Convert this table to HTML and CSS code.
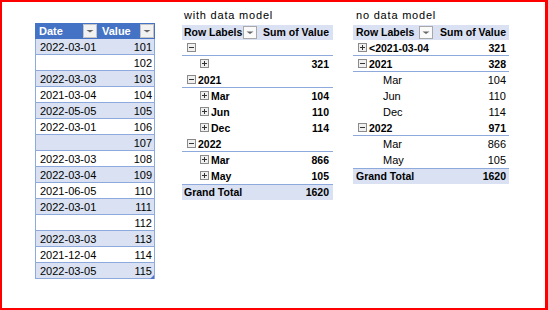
FILE: index.html
```html
<!DOCTYPE html>
<html>
<head>
<meta charset="utf-8">
<link rel="stylesheet" href="styles.css">
</head>
<body>
<div class="frame">
  <div class="xtable">
    <div class="xhead">
      <div class="hcell c-date"><span>Date</span><svg class="fbtn" width="14" height="14" viewBox="0 0 14 14"><rect x="0.5" y="0.5" width="13" height="13" fill="#f2f2f2" stroke="#c4c4c4"/><path d="M3.5 6h7l-3.5 2.5z" fill="#666"/></svg></div>
      <div class="hcell c-val"><span>Value</span><svg class="fbtn" width="14" height="14" viewBox="0 0 14 14"><rect x="0.5" y="0.5" width="13" height="13" fill="#f2f2f2" stroke="#c4c4c4"/><path d="M3.5 6h7l-3.5 2.5z" fill="#666"/></svg></div>
    </div>
    <div class="xrow band"><div class="c-date">2022-03-01</div><div class="c-val">101</div></div>
    <div class="xrow"><div class="c-date"></div><div class="c-val">102</div></div>
    <div class="xrow band"><div class="c-date">2022-03-03</div><div class="c-val">103</div></div>
    <div class="xrow"><div class="c-date">2021-03-04</div><div class="c-val">104</div></div>
    <div class="xrow band"><div class="c-date">2022-05-05</div><div class="c-val">105</div></div>
    <div class="xrow"><div class="c-date">2022-03-01</div><div class="c-val">106</div></div>
    <div class="xrow band"><div class="c-date"></div><div class="c-val">107</div></div>
    <div class="xrow"><div class="c-date">2022-03-03</div><div class="c-val">108</div></div>
    <div class="xrow band"><div class="c-date">2022-03-04</div><div class="c-val">109</div></div>
    <div class="xrow"><div class="c-date">2021-06-05</div><div class="c-val">110</div></div>
    <div class="xrow band"><div class="c-date">2022-03-01</div><div class="c-val">111</div></div>
    <div class="xrow"><div class="c-date"></div><div class="c-val">112</div></div>
    <div class="xrow band"><div class="c-date">2022-03-03</div><div class="c-val">113</div></div>
    <div class="xrow"><div class="c-date">2021-12-04</div><div class="c-val">114</div></div>
    <div class="xrow band"><div class="c-date">2022-03-05</div><div class="c-val">115</div></div>
    <span class="handle"></span>
  </div>

  <div class="pivot p1">
    <div class="plabel">with data model</div>
    <div class="ptable">
      <div class="prow phead"><div class="plab">Row Labels<svg class="pbtn" width="14" height="13" viewBox="0 0 14 13"><rect x="0.5" y="0.5" width="13" height="12" fill="#fafafa" stroke="#a8a8a8"/><path d="M3.5 5.5h7l-3.5 2.5z" fill="#666"/></svg></div><div class="pval">Sum of Value</div></div>
      <div class="prow b line"><div class="plab l0"><svg class="ex" width="9" height="9" viewBox="0 0 9 9"><rect x="0.5" y="0.5" width="8" height="8" fill="#f0f0f0" stroke="#8a8a8a"/><path d="M2 4.5h5" stroke="#333"/></svg></div><div class="pval"></div></div>
      <div class="prow b"><div class="plab l1"><svg class="ex" width="9" height="9" viewBox="0 0 9 9"><rect x="0.5" y="0.5" width="8" height="8" fill="#f0f0f0" stroke="#8a8a8a"/><path d="M2 4.5h5M4.5 2v5" stroke="#333"/></svg></div><div class="pval">321</div></div>
      <div class="prow b line"><div class="plab l0"><svg class="ex" width="9" height="9" viewBox="0 0 9 9"><rect x="0.5" y="0.5" width="8" height="8" fill="#f0f0f0" stroke="#8a8a8a"/><path d="M2 4.5h5" stroke="#333"/></svg>2021</div><div class="pval"></div></div>
      <div class="prow b"><div class="plab l1"><svg class="ex" width="9" height="9" viewBox="0 0 9 9"><rect x="0.5" y="0.5" width="8" height="8" fill="#f0f0f0" stroke="#8a8a8a"/><path d="M2 4.5h5M4.5 2v5" stroke="#333"/></svg>Mar</div><div class="pval">104</div></div>
      <div class="prow b"><div class="plab l1"><svg class="ex" width="9" height="9" viewBox="0 0 9 9"><rect x="0.5" y="0.5" width="8" height="8" fill="#f0f0f0" stroke="#8a8a8a"/><path d="M2 4.5h5M4.5 2v5" stroke="#333"/></svg>Jun</div><div class="pval">110</div></div>
      <div class="prow b"><div class="plab l1"><svg class="ex" width="9" height="9" viewBox="0 0 9 9"><rect x="0.5" y="0.5" width="8" height="8" fill="#f0f0f0" stroke="#8a8a8a"/><path d="M2 4.5h5M4.5 2v5" stroke="#333"/></svg>Dec</div><div class="pval">114</div></div>
      <div class="prow b line"><div class="plab l0"><svg class="ex" width="9" height="9" viewBox="0 0 9 9"><rect x="0.5" y="0.5" width="8" height="8" fill="#f0f0f0" stroke="#8a8a8a"/><path d="M2 4.5h5" stroke="#333"/></svg>2022</div><div class="pval"></div></div>
      <div class="prow b"><div class="plab l1"><svg class="ex" width="9" height="9" viewBox="0 0 9 9"><rect x="0.5" y="0.5" width="8" height="8" fill="#f0f0f0" stroke="#8a8a8a"/><path d="M2 4.5h5M4.5 2v5" stroke="#333"/></svg>Mar</div><div class="pval">866</div></div>
      <div class="prow b"><div class="plab l1"><svg class="ex" width="9" height="9" viewBox="0 0 9 9"><rect x="0.5" y="0.5" width="8" height="8" fill="#f0f0f0" stroke="#8a8a8a"/><path d="M2 4.5h5M4.5 2v5" stroke="#333"/></svg>May</div><div class="pval">105</div></div>
      <div class="prow b total"><div class="plab">Grand Total</div><div class="pval">1620</div></div>
    </div>
  </div>

  <div class="pivot p2">
    <div class="plabel">no data model</div>
    <div class="ptable">
      <div class="prow phead"><div class="plab">Row Labels<svg class="pbtn" width="14" height="13" viewBox="0 0 14 13"><rect x="0.5" y="0.5" width="13" height="12" fill="#fafafa" stroke="#a8a8a8"/><path d="M3.5 5.5h7l-3.5 2.5z" fill="#666"/></svg></div><div class="pval">Sum of Value</div></div>
      <div class="prow b line"><div class="plab l0"><svg class="ex" width="9" height="9" viewBox="0 0 9 9"><rect x="0.5" y="0.5" width="8" height="8" fill="#f0f0f0" stroke="#8a8a8a"/><path d="M2 4.5h5M4.5 2v5" stroke="#333"/></svg>&lt;2021-03-04</div><div class="pval">321</div></div>
      <div class="prow b line"><div class="plab l0"><svg class="ex" width="9" height="9" viewBox="0 0 9 9"><rect x="0.5" y="0.5" width="8" height="8" fill="#f0f0f0" stroke="#8a8a8a"/><path d="M2 4.5h5" stroke="#333"/></svg>2021</div><div class="pval">328</div></div>
      <div class="prow"><div class="plab l2">Mar</div><div class="pval">104</div></div>
      <div class="prow"><div class="plab l2">Jun</div><div class="pval">110</div></div>
      <div class="prow"><div class="plab l2">Dec</div><div class="pval">114</div></div>
      <div class="prow b line"><div class="plab l0"><svg class="ex" width="9" height="9" viewBox="0 0 9 9"><rect x="0.5" y="0.5" width="8" height="8" fill="#f0f0f0" stroke="#8a8a8a"/><path d="M2 4.5h5" stroke="#333"/></svg>2022</div><div class="pval">971</div></div>
      <div class="prow"><div class="plab l2">Mar</div><div class="pval">866</div></div>
      <div class="prow"><div class="plab l2">May</div><div class="pval">105</div></div>
      <div class="prow b total"><div class="plab">Grand Total</div><div class="pval">1620</div></div>
    </div>
  </div>
</div>
</body>
</html>
```

FILE: styles.css
```css
* { box-sizing: border-box; }
html, body { margin: 0; padding: 0; background: #fff; }
body {
  font-family: "Liberation Sans", Arial, sans-serif;
  font-size: 11px;
  color: #000;
}
.frame {
  width: 548px;
  height: 310px;
  border: 2px solid #ff0000;
  border-right-width: 3px;
  display: flex;
  align-items: flex-start;
  padding-left: 33px;
}

/* Excel table */
.xtable {
  position: relative;
  width: 120px;
  margin-top: 21px;
  border-left: 1px solid #8ea9db;
  border-right: 1px solid #8ea9db;
}
.xhead {
  display: flex;
  height: 16px;
  margin: 0 -1px;
  background: #4472c4;
  color: #fff;
  font-weight: bold;
}
.hcell {
  display: flex;
  justify-content: space-between;
  align-items: flex-start;
  padding-top: 2px;
  line-height: 13px;
}
.hcell .fbtn { display: block; margin-top: -1px; margin-right: 1px; }
.xhead .c-date { width: 63px; padding-left: 4px; }
.xhead .c-val { flex: 1; padding-left: 4px; }
.xrow {
  display: flex;
  height: 16px;
  border-bottom: 1px solid #8ea9db;
  padding-top: 2px;
  line-height: 13px;
}
.xrow.band { background: #d9e1f2; }
.xrow .c-date { width: 62px; padding-left: 4px; }
.xrow .c-val { flex: 1; text-align: right; padding-right: 2px; }
.handle {
  position: absolute;
  right: 0;
  bottom: 0;
  width: 0;
  height: 0;
  border-left: 4px solid transparent;
  border-bottom: 4px solid #4f73c9;
}

/* Pivot tables */
.pivot {
  display: flex;
  flex-direction: column;
  margin-top: 6px;
}
.p1 { margin-left: 27px; width: 151px; }
.p2 { margin-left: 20px; width: 156px; }
.plabel {
  line-height: 14px;
  margin-bottom: 3px;
  letter-spacing: 0.8px;
  padding-left: 2px;
}
.p2 .plabel { padding-left: 3px; }
.prow {
  display: flex;
  height: 16px;
  padding-top: 2px;
  line-height: 13px;
}
.prow.b { font-weight: bold; font-size: 10.5px; }
.prow.line { border-bottom: 1px solid #8ea9db; }
.phead {
  height: 15px;
  padding-top: 1px;
  background: #d9e1f2;
  font-weight: bold;
  font-size: 10.5px;
}
.phead .plab {
  display: flex;
  justify-content: space-between;
  align-items: flex-start;
  padding-left: 2px;
}
.p2 .phead .plab { padding-left: 3px; }
.pbtn { display: block; margin-top: 0; margin-right: 1px; }
.plab { flex: 1; white-space: nowrap; }
.plab.l0 { padding-left: 5px; }
.plab.l1 { padding-left: 18px; }
.plab.l2 { padding-left: 30px; }
.total {
  background: #d9e1f2;
  border-top: 1px solid #8ea9db;
  padding-top: 1px;
}
.total .plab { padding-left: 2px; }
.p2 .total .plab { padding-left: 3px; }
.pval {
  width: 75px;
  text-align: right;
  padding-right: 4px;
  white-space: nowrap;
}
.p2 .pval { padding-right: 3px; }
.ex {
  display: inline-block;
  vertical-align: 0;
  margin-right: 2px;
}
```
